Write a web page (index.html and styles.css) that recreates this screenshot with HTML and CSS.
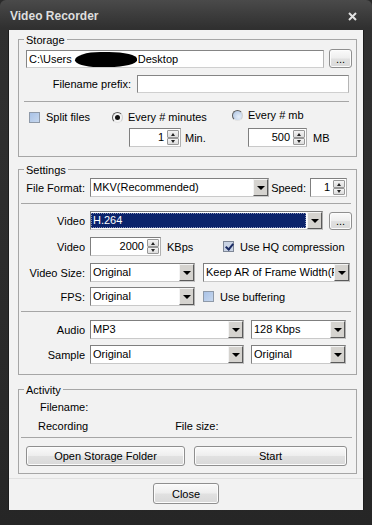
FILE: index.html
```html
<!DOCTYPE html>
<html lang="en">
  <head>
    <meta charset="UTF-8" />
    <title>Video Recorder</title>
    <link rel="stylesheet" href="styles.css">
  </head>
  <body>
    <div class="window">
      <header class="titlebar">
        <span class="title">Video Recorder</span>
        <svg class="close" width="9" height="9" viewBox="0 0 9 9">
          <path d="M1 1 L8 8 M8 1 L1 8" stroke="#e2e2e2" stroke-width="2" />
        </svg>
      </header>

      <main class="client">
        <section class="group storage">
          <span class="group-title">Storage</span>
          <div class="row path-row">
            <div class="field path">C:\Users<span class="redact"></span>Desktop</div>
            <button class="btn dots">...</button>
          </div>
          <div class="row prefix-row">
            <label class="prefix-label">Filename prefix:</label>
            <div class="field prefix"></div>
          </div>
          <hr class="sep storage-sep">
          <div class="split-grid">
            <div class="cell">
              <span class="check split-check"></span>
              <span class="cap">Split files</span>
            </div>
            <div class="cell">
              <span class="radio on"></span>
              <span class="cap">Every # minutes</span>
            </div>
            <div class="cell raised">
              <span class="radio"></span>
              <span class="cap">Every # mb</span>
            </div>
            <div class="cell spin-row"></div>
            <div class="cell spin-row">
              <div class="spin min-spin"><span class="spin-val">1</span><span class="spin-btns"><i class="up"></i><i class="down"></i></span></div>
              <span class="unit min-unit">Min.</span>
            </div>
            <div class="cell spin-row">
              <div class="spin mb-spin"><span class="spin-val">500</span><span class="spin-btns"><i class="up"></i><i class="down"></i></span></div>
              <span class="unit mb-unit">MB</span>
            </div>
          </div>
        </section>

        <section class="group settings">
          <span class="group-title">Settings</span>
          <div class="row ff-row">
            <label class="lbl">File Format:</label>
            <div class="combo ff-combo"><span class="combo-text">MKV(Recommended)</span><span class="combo-btn"></span></div>
            <label class="speed-label">Speed:</label>
            <div class="spin speed-spin"><span class="spin-val">1</span><span class="spin-btns"><i class="up"></i><i class="down"></i></span></div>
          </div>
          <hr class="sep settings-sep first-sep">
          <div class="row video-row">
            <label class="lbl">Video</label>
            <div class="combo codec-combo"><span class="combo-text selected">H.264</span><span class="combo-btn"></span></div>
            <button class="btn dots codec-dots">...</button>
          </div>
          <div class="row rate-row">
            <label class="lbl">Video</label>
            <div class="spin rate-spin"><span class="spin-val">2000</span><span class="spin-btns"><i class="up"></i><i class="down"></i></span></div>
            <span class="unit kbps">KBps</span>
            <span class="check on"></span>
            <span class="cap">Use HQ compression</span>
          </div>
          <div class="row size-row">
            <label class="lbl">Video Size:</label>
            <div class="combo small-combo"><span class="combo-text">Original</span><span class="combo-btn"></span></div>
            <div class="combo ar-combo"><span class="combo-text">Keep AR of Frame Width(Frame Height)</span><span class="combo-btn"></span></div>
          </div>
          <div class="row fps-row">
            <label class="lbl">FPS:</label>
            <div class="combo small-combo"><span class="combo-text">Original</span><span class="combo-btn"></span></div>
            <span class="check buffer-check"></span>
            <span class="cap">Use buffering</span>
          </div>
          <hr class="sep settings-sep second-sep">
          <div class="row audio-row">
            <label class="lbl">Audio</label>
            <div class="combo audio-combo"><span class="combo-text">MP3</span><span class="combo-btn"></span></div>
            <div class="combo aside-combo"><span class="combo-text">128 Kbps</span><span class="combo-btn"></span></div>
          </div>
          <div class="row sample-row">
            <label class="lbl">Sample</label>
            <div class="combo audio-combo"><span class="combo-text">Original</span><span class="combo-btn"></span></div>
            <div class="combo aside-combo"><span class="combo-text">Original</span><span class="combo-btn"></span></div>
          </div>
        </section>

        <section class="group activity">
          <span class="group-title">Activity</span>
          <div class="line filename-line">Filename:</div>
          <div class="line recording-line">
            <span class="recording">Recording</span>
            <span class="filesize">File size:</span>
          </div>
          <hr class="sep activity-sep">
          <div class="row actions">
            <button class="btn open-btn">Open Storage Folder</button>
            <button class="btn start-btn">Start</button>
          </div>
        </section>

        <footer class="footer">
          <button class="btn close-btn">Close</button>
        </footer>
      </main>
    </div>
  </body>
</html>
```

FILE: styles.css
```css
* {
  box-sizing: border-box;
}

body {
  margin: 0;
  font-family: "Liberation Sans", Arial, sans-serif;
  font-size: 11px;
  color: #000;
  background: #2a2a2a;
}

.window {
  width: 372px;
  height: 525px;
  display: flex;
  flex-direction: column;
  background: linear-gradient(#4a4a4a, #303030 28px, #2b2b2b 60%, #262626);
  border-radius: 6px 6px 0 0;
}

.titlebar {
  height: 30px;
  display: flex;
  align-items: center;
  justify-content: space-between;
  padding: 2px 15px 0 10px;
  color: #dedede;
  font-size: 12px;
  font-weight: bold;
}

.client {
  height: 480px;
  margin: 0 8px;
  padding: 9px 7px 0 10px;
  display: flex;
  flex-direction: column;
  background: #f2f2f2;
  border: 1px solid #1c1c1c;
  border-top: 0;
  border-bottom: 0;
  padding-left: 9px;
  padding-right: 6px;
}

/* group boxes */
.group {
  position: relative;
  width: 339px;
  border: 1px solid #a6a6a6;
}

.group-title {
  position: absolute;
  top: -6px;
  left: 5px;
  padding: 0 2px;
  line-height: 13px;
  background: #f2f2f2;
}

.row {
  display: flex;
  align-items: center;
}

.sep {
  margin: 0;
  border: 0;
  height: 1px;
  background: #a6a6a6;
}

.cap,
.unit,
label {
  white-space: nowrap;
}

/* fields */
.field {
  height: 18px;
  line-height: 16px;
  padding-left: 2px;
  background: #fff;
  border: 1px solid #858585;
  border-bottom-color: #cfcfcf;
  border-right-color: #b5b5b5;
  white-space: nowrap;
  overflow: hidden;
}

.redact {
  display: inline-block;
  width: 62px;
  height: 15px;
  margin: 0 1px 0 3px;
  vertical-align: -4px;
  background: #000;
  border-radius: 45% 50% 50% 40% / 60% 50% 50% 50%;
}

.btn {
  font-family: inherit;
  font-size: 11px;
  color: #000;
  padding: 0;
  border: 1px solid #8f8f8f;
  border-radius: 3px;
  background: linear-gradient(#fafafa, #eeeeee 48%, #e1e1e1 52%, #d9d9d9);
  box-shadow: inset 0 0 0 1px #fcfcfc;
}

.dots {
  width: 23px;
  height: 19px;
  line-height: 12px;
}

/* combo boxes */
.combo {
  display: flex;
  height: 19px;
  background: #fff;
  border: 1px solid #7f7f7f;
  border-bottom-color: #c9c9c9;
  border-right-color: #b0b0b0;
}

.combo-text {
  flex: 1;
  min-width: 0;
  padding-left: 2px;
  line-height: 17px;
  white-space: nowrap;
  overflow: hidden;
}

.combo-text.selected {
  margin: 1px 1px 1px 0;
  line-height: 15px;
  color: #fff;
  background: #0b236b;
  outline: 1px dotted #8a93b8;
  outline-offset: -1px;
}

.combo-btn {
  position: relative;
  width: 15px;
  flex: none;
  background: #d5d3cf;
  border: 1px solid;
  border-color: #f4f4f4 #5a5a5a #5a5a5a #f4f4f4;
}

.combo-btn::after {
  content: "";
  position: absolute;
  left: 3px;
  top: 6px;
  border-left: 4px solid transparent;
  border-right: 4px solid transparent;
  border-top: 4px solid #000;
}

/* spinners */
.spin {
  display: flex;
  height: 19px;
  background: #fff;
  border: 1px solid #7f7f7f;
  border-bottom-color: #c9c9c9;
  border-right-color: #b0b0b0;
}

.spin-val {
  flex: 1;
  text-align: right;
  padding-right: 3px;
  line-height: 17px;
}

.spin-btns {
  display: flex;
  flex-direction: column;
  width: 13px;
  padding: 1px 1px 1px 0;
}

.spin-btns i {
  position: relative;
  flex: 1;
  background: linear-gradient(#f4f4f4, #dcdcdc);
  border: 1px solid #979797;
  border-radius: 1px;
}

.spin-btns i::after {
  content: "";
  position: absolute;
  left: 3px;
  top: 2px;
  border-left: 2.5px solid transparent;
  border-right: 2.5px solid transparent;
}

.spin-btns .up::after {
  border-bottom: 3px solid #222;
}

.spin-btns .down::after {
  top: 1px;
  border-top: 3px solid #222;
}

/* check & radio */
.check {
  position: relative;
  display: inline-block;
  flex: none;
  width: 11px;
  height: 11px;
  border: 1px solid #8e99a8;
  background: linear-gradient(135deg, #a9c2e6, #c6d7ee);
}

.check.on {
  background: #c9d3e4;
  border-color: #7e8796;
}

.check.on::after {
  content: "";
  position: absolute;
  left: 3px;
  top: 0;
  width: 3px;
  height: 6px;
  border: solid #1b2a63;
  border-width: 0 2px 2px 0;
  transform: rotate(40deg);
}

.radio {
  position: relative;
  display: inline-block;
  flex: none;
  width: 11px;
  height: 11px;
  border-radius: 50%;
  border: 1px solid;
  border-color: #5b5b5b #cfcfcf #e4e4e4 #5b5b5b;
  background: radial-gradient(circle at 65% 65%, #e6eef8, #a9c1e2);
}

.radio.on {
  background: #f4f4f4;
}

.radio.on::after {
  content: "";
  position: absolute;
  left: 2px;
  top: 2px;
  width: 5px;
  height: 5px;
  border-radius: 50%;
  background: #111;
}

/* storage */
.storage {
  padding: 9px 0 9px 0;
}

.path-row {
  height: 19px;
  padding-left: 7px;
}

.path {
  width: 298px;
  margin-top: 1px;
  padding-left: 2px;
}

.path-row .dots {
  margin-left: 5px;
}

.prefix-row {
  margin-top: 7px;
}

.prefix-label {
  width: 112px;
  text-align: right;
}

.prefix {
  width: 212px;
  margin-left: 6px;
}

.storage-sep {
  width: 325px;
  margin: 8px 0 0 5px;
}

.split-grid {
  display: grid;
  grid-template-columns: 93px 120px 1fr;
  margin-top: 8px;
}

.cell {
  display: flex;
  align-items: center;
  height: 14px;
}

.raised {
  margin-top: -2px;
}

.split-check {
  margin-left: 10px;
}

.cell .cap {
  margin-left: 6px;
}

.cell .radio + .cap {
  margin-left: 5px;
}

.spin-row {
  height: 19px;
  margin-top: 4px;
}

.raised + .spin-row,
.raised ~ .spin-row {
  margin-top: 4px;
}

.min-spin {
  width: 52px;
  margin-left: 17px;
}

.min-unit {
  margin-left: 4px;
}

.mb-spin {
  width: 59px;
  margin-left: 16px;
}

.mb-unit {
  margin-left: 6px;
}

/* settings */
.settings {
  margin-top: 12px;
  padding: 8px 0 10px 0;
}

.settings .row {
  height: 19px;
}

.lbl {
  width: 66px;
  margin-right: 5px;
  text-align: right;
}

.ff-combo {
  width: 179px;
}

.speed-label {
  width: 41px;
  padding-right: 4px;
  text-align: right;
  overflow: hidden;
}

.speed-spin {
  width: 37px;
}

.settings-sep {
  width: 330px;
  margin-left: 2px;
}

.first-sep {
  margin-top: 6px;
}

.video-row {
  margin-top: 7px;
}

.codec-combo {
  width: 233px;
}

.codec-dots {
  margin-left: 6px;
  height: 18px;
}

.rate-row {
  margin-top: 7px;
}

.rate-spin {
  width: 71px;
}

.kbps {
  width: 56px;
  margin-left: 6px;
}

.rate-row .cap,
.fps-row .cap {
  margin-left: 6px;
}

.size-row {
  margin-top: 7px;
}

.small-combo {
  width: 105px;
}

.ar-combo {
  width: 147px;
  margin-left: 8px;
}

.fps-row {
  margin-top: 5px;
}

.buffer-check {
  margin-left: 8px;
}

.second-sep {
  margin-top: 5px;
}

.audio-row {
  margin-top: 8px;
}

.sample-row {
  margin-top: 6px;
}

.audio-combo {
  width: 154px;
}

.aside-combo {
  width: 95px;
  margin-left: 7px;
}

/* activity */
.activity {
  margin-top: 14px;
  padding: 11px 0 7px 0;
}

.line {
  display: flex;
  line-height: 13px;
}

.filename-line {
  padding-left: 21px;
}

.recording-line {
  margin-top: 6px;
  padding-left: 19px;
}

.filesize {
  margin-left: 87px;
}

.activity-sep {
  width: 331px;
  margin: 4px 0 0 2px;
}

.actions {
  margin-top: 8px;
}

.open-btn {
  width: 159px;
  height: 20px;
  margin-left: 7px;
}

.start-btn {
  width: 153px;
  height: 20px;
  margin-left: 9px;
}

.footer {
  display: flex;
  justify-content: center;
  margin: 4px -6px 0 -9px;
  padding-top: 4px;
  border-top: 1px solid #e1e1e1;
}

.close-btn {
  width: 66px;
  height: 21px;
}
```
